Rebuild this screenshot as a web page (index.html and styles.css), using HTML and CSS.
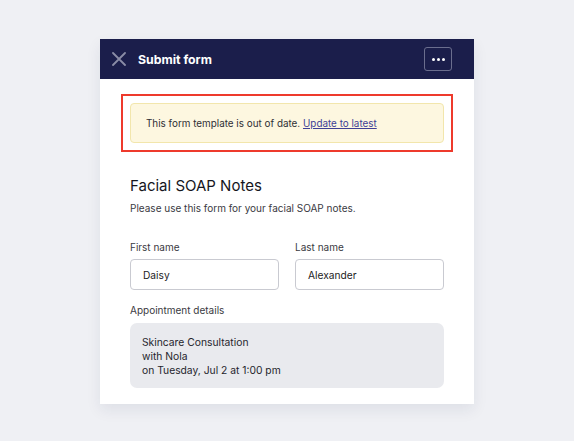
FILE: index.html
```html
<!DOCTYPE html>
<html>
<head>
<meta charset="utf-8">
<link rel="stylesheet" href="styles.css">
</head>
<body>
<div class="card">
  <div class="header">
    <svg class="close" width="14" height="14" viewBox="0 0 14 14"><path d="M1 1L13 13M13 1L1 13" stroke="#8a8ca6" stroke-width="1.8" stroke-linecap="round"/></svg>
    <div class="title">Submit form</div>
    <div class="more"><span class="dot"></span><span class="dot"></span><span class="dot"></span></div>
  </div>
  <div class="body">
    <div class="highlight">
      <div class="banner">This form template is out of date. <a class="link">Update to latest</a></div>
    </div>
    <h1 class="form-title">Facial SOAP Notes</h1>
    <p class="form-desc">Please use this form for your facial SOAP notes.</p>
    <div class="row">
      <div class="field">
        <div class="label">First name</div>
        <div class="input">Daisy</div>
      </div>
      <div class="field">
        <div class="label">Last name</div>
        <div class="input">Alexander</div>
      </div>
    </div>
    <div class="label appt-label">Appointment details</div>
    <div class="appt">
      <div>Skincare Consultation</div>
      <div>with Nola</div>
      <div>on Tuesday, Jul 2 at 1:00 pm</div>
    </div>
  </div>
</div>
</body>
</html>
```
FILE: styles.css
```css
html, body { margin: 0; padding: 0; }
body {
  background: #eff0f4;
  font-family: "Inter", "Noto Sans", sans-serif;
  width: 574px;
  height: 441px;
  overflow: hidden;
}
.card {
  width: 374px;
  margin: 39px auto 0;
  background: #fff;
  box-shadow: 0 6px 14px rgba(30, 35, 80, 0.08);
}
.header {
  height: 40px;
  background: #1b1e4b;
  display: flex;
  align-items: center;
  padding: 0 22px 0 12px;
}
.close { display: block; flex: none; }
.title {
  margin-left: 12px;
  color: #fff;
  font-weight: 700;
  font-size: 12.3px;
  flex: 1;
}
.more {
  width: 26px;
  height: 22px;
  border: 1px solid #6b6e8e;
  border-radius: 3px;
  display: flex;
  align-items: center;
  justify-content: center;
  gap: 2px;
}
.dot { width: 3px; height: 3px; border-radius: 50%; background: #fff; }
.body { padding: 24px 30px 16px; }
.highlight {
  margin: -9px;
  border: 2px solid #ee3a2c;
  padding: 7px;
}
.banner {
  box-sizing: border-box;
  height: 40px;
  background: #fdf7e0;
  border: 1px solid #f2e6ac;
  border-radius: 4px;
  display: flex;
  align-items: center;
  padding-left: 15px;
  font-size: 9.9px;
  color: #2f2f35;
  white-space: pre;
}
.link { color: #3f3f96; text-decoration: underline; }
.form-title {
  margin: 33px 0 0;
  font-size: 15px;
  font-weight: 400;
  color: #16161d;
  line-height: 20px;
}
.form-desc {
  margin: 5px 0 0;
  font-size: 10px;
  color: #3a3a42;
  line-height: 14px;
}
.row { display: flex; gap: 16px; margin-top: 25px; }
.field { flex: 1; }
.label { font-size: 10px; color: #3a3a42; line-height: 14px; }
.input {
  margin-top: 5px;
  height: 31px;
  box-sizing: border-box;
  border: 1px solid #c9cad1;
  border-radius: 4px;
  display: flex;
  align-items: center;
  padding-left: 12px;
  font-size: 10.2px;
  color: #222;
}
.appt-label { margin-top: 13px; }
.appt {
  margin-top: 6px;
  background: #e9eaee;
  border-radius: 7px;
  padding: 12px 12px 11px;
  font-size: 10.3px;
  line-height: 14px;
  color: #25252c;
}
```
